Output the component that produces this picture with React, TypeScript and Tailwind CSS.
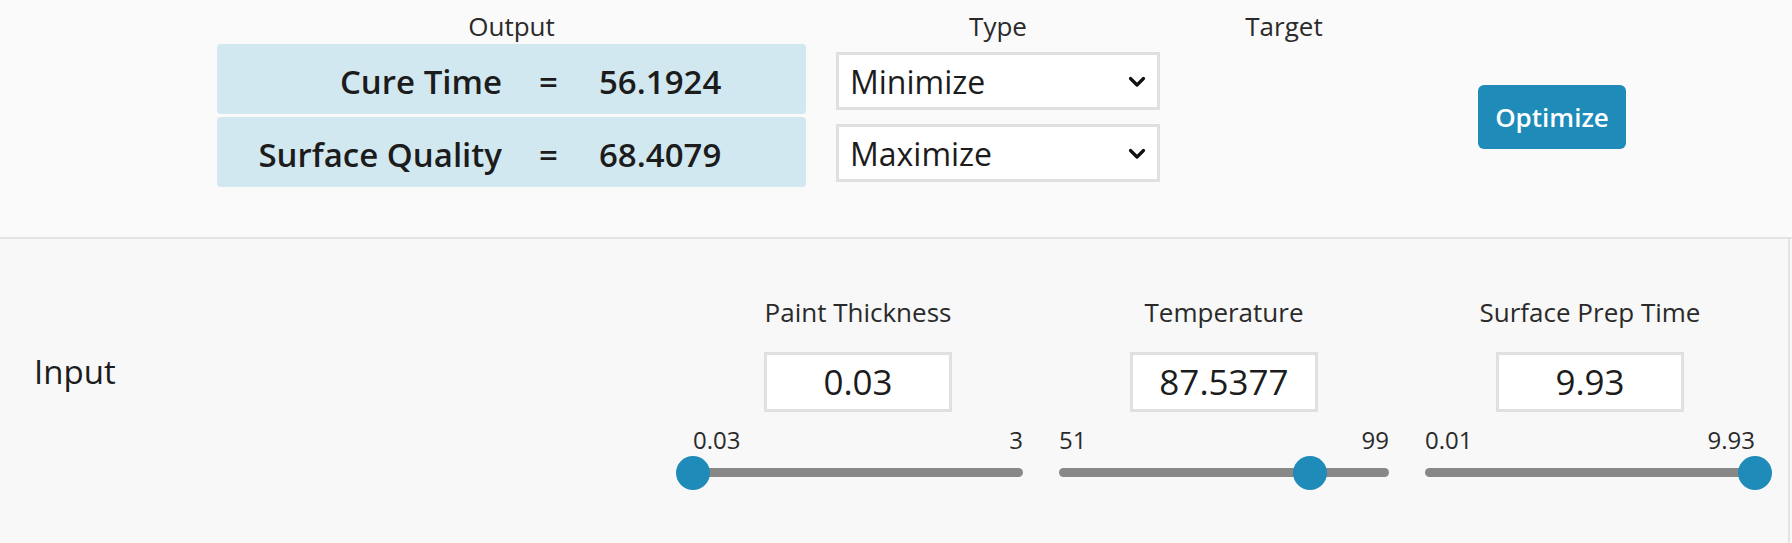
import React from "react";

const FONT = { fontFamily: '"Open Sans", "Noto Sans", Arial, sans-serif' };

function Chevron() {
  return (
    <svg width="20" height="13" viewBox="0 0 20 13" className="shrink-0">
      <path d="M3.5 3.5 L10 10 L16.5 3.5" fill="none" stroke="#111" strokeWidth="3.2" strokeLinecap="round" strokeLinejoin="round" />
    </svg>
  );
}

function OutputRow({ name, value }: { name: string; value: string }) {
  return (
    <div className="h-[70px] pt-[5px] bg-[#d2e8f0] rounded-[4px] grid grid-cols-[285px_93px_1fr] items-center text-[33px] font-semibold text-[#1c1c1c] leading-[40px]">
      <div className="text-right whitespace-nowrap">{name}</div>
      <div className="text-center">=</div>
      <div className="pl-[4px]">{value}</div>
    </div>
  );
}

function Dropdown({ value }: { value: string }) {
  return (
    <div className="h-[58px] bg-white border-[3px] border-[#e0e0e0] flex items-center justify-between pl-[11px] pr-[10px] text-[32px] text-[#1c1c1c] leading-[40px]">
      <span className="pt-[2px]">{value}</span>
      <Chevron />
    </div>
  );
}

function SliderCol({
  label,
  value,
  min,
  max,
  minLabel,
  maxLabel,
}: {
  label: string;
  value: string;
  min: number;
  max: number;
  minLabel: string;
  maxLabel: string;
}) {
  const pct = ((parseFloat(value) - min) / (max - min)) * 100;
  return (
    <div className="w-[366px] px-[18px] flex flex-col items-center">
      <div className="text-[26px] leading-[32px] text-[#2a2a2a] whitespace-nowrap">{label}</div>
      <div className="mt-[24px] w-[188px] h-[60px] bg-white border-[3px] border-[#e0e0e0] flex items-center justify-center text-[35px] leading-[40px] text-[#1c1c1c]">
        {value}
      </div>
      <div className="mt-[13px] w-full flex justify-between text-[24px] leading-[30px] text-[#2a2a2a]">
        <span>{minLabel}</span>
        <span>{maxLabel}</span>
      </div>
      <div className="relative w-full h-[36px]">
        <div className="absolute left-0 right-0 top-[13px] h-[9px] rounded-full bg-[#888888]" />
        <div
          className="absolute top-[1px] w-[34px] h-[34px] -ml-[17px] rounded-full bg-[#1e8bb9]"
          style={{ left: `${pct}%` }}
        />
      </div>
    </div>
  );
}

export default function App() {
  return (
    <div style={FONT} className="w-[1792px] h-[543px] bg-[#f8f8f8] overflow-hidden">
      <div className="h-[239px] border-b-2 border-[#e3e3e3] bg-[#fafafa] flex pt-[10px] pl-[217px]">
        <div className="w-[589px]">
          <div className="text-center text-[26px] leading-[32px] text-[#2a2a2a]">Output</div>
          <div className="mt-[2px] flex flex-col gap-[3px]">
            <OutputRow name="Cure Time" value="56.1924" />
            <OutputRow name="Surface Quality" value="68.4079" />
          </div>
        </div>
        <div className="ml-[30px] w-[324px]">
          <div className="text-center text-[26px] leading-[32px] text-[#2a2a2a]">Type</div>
          <div className="mt-[10px] flex flex-col gap-[14px]">
            <Dropdown value="Minimize" />
            <Dropdown value="Maximize" />
          </div>
        </div>
        <div className="w-[248px]">
          <div className="text-center text-[26px] leading-[32px] text-[#2a2a2a]">Target</div>
        </div>
        <div className="ml-[70px] mt-[75px]">
          <button className="w-[148px] h-[64px] rounded-[6px] bg-[#1e8bb9] text-white text-[26px] font-semibold leading-[32px]">
            Optimize
          </button>
        </div>
      </div>
      <div className="w-[1790px] h-[304px] border-r-2 border-[#e3e3e3] bg-[#f8f8f8] flex items-start pt-[57px]">
        <div className="w-[675px] pl-[34px] pt-[56px] text-[33px] leading-[40px] text-[#1c1c1c]">Input</div>
        <SliderCol label="Paint Thickness" value="0.03" min={0.03} max={3} minLabel="0.03" maxLabel="3" />
        <SliderCol label="Temperature" value="87.5377" min={51} max={99} minLabel="51" maxLabel="99" />
        <SliderCol label="Surface Prep Time" value="9.93" min={0.01} max={9.93} minLabel="0.01" maxLabel="9.93" />
      </div>
    </div>
  );
}
